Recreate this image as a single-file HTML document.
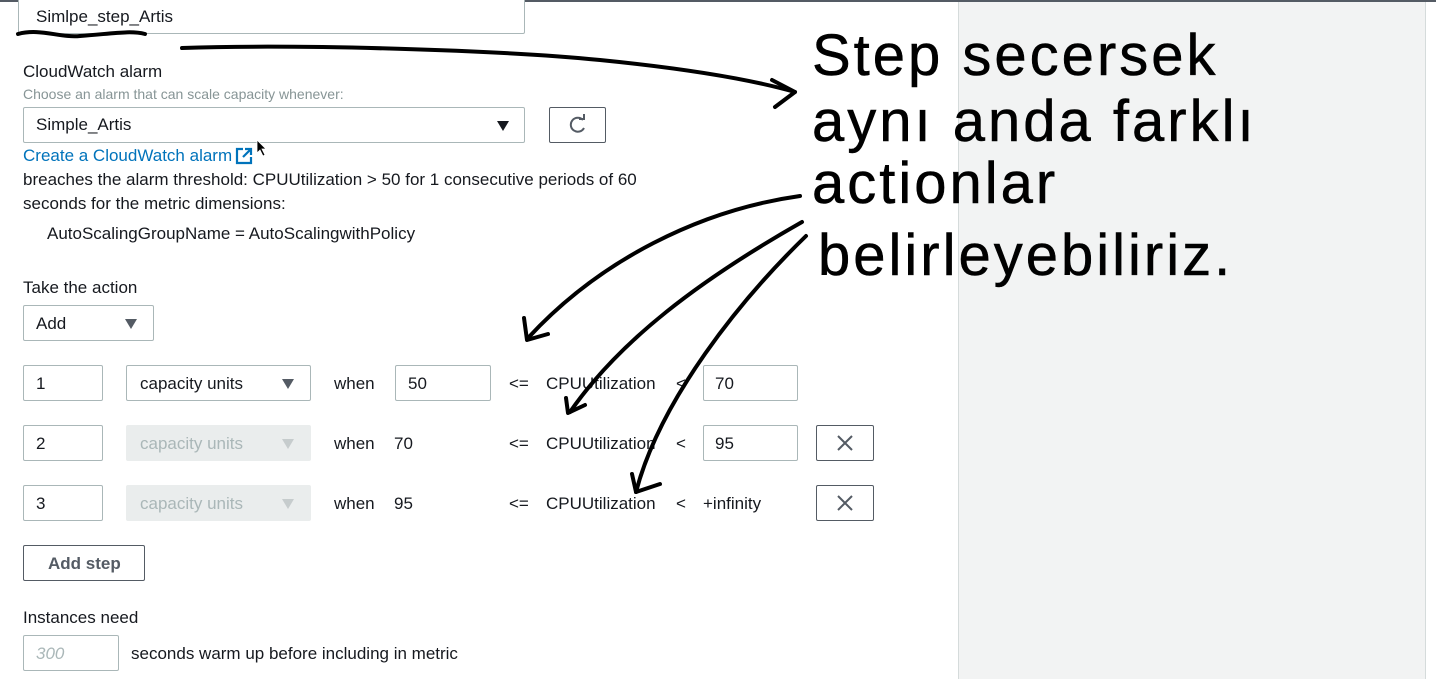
<!DOCTYPE html>
<html><head><meta charset="utf-8"><style>
body{margin:0;width:1436px;height:679px;overflow:hidden;background:#fff;font-family:"Liberation Sans",sans-serif;color:#16191f;position:relative}
.a{position:absolute;white-space:nowrap;font-size:17px;line-height:20px}
.box{position:absolute;border:1px solid #aab7b8;background:#fff;box-sizing:border-box;border-radius:2px}
.dis{background:#eaeded;border-color:#eaeded;color:#aab7b8}
.tri{position:absolute;width:0;height:0;border-left:6px solid transparent;border-right:6px solid transparent;border-top:10px solid #16191f}
.hw{position:absolute;font-size:58px;color:#000;white-space:nowrap;font-family:"Liberation Sans",sans-serif;letter-spacing:3px;-webkit-text-stroke:0.5px #000}
</style></head><body>
<div style="position:absolute;left:0;top:0;width:1436px;height:2px;background:#545b64"></div>
<div style="position:absolute;left:958px;top:2px;width:466px;height:677px;background:#f2f3f3;border-left:1px solid #d5dbdb;border-right:1px solid #d5dbdb"></div>

<div class="box" style="left:18px;top:-2px;width:507px;height:36px"></div>
<div class="a" style="left:36px;top:7px">Simlpe_step_Artis</div>

<div class="a" style="left:23px;top:62px">CloudWatch alarm</div>
<div class="a" style="left:23px;top:84px;font-size:14px;color:#879596">Choose an alarm that can scale capacity whenever:</div>
<div class="box" style="left:23px;top:107px;width:502px;height:36px"></div>
<div class="a" style="left:36px;top:115px">Simple_Artis</div>
<div class="tri" style="left:497px;top:121px"></div>
<div class="box" style="left:549px;top:107px;width:57px;height:36px;border-color:#545b64"></div>
<svg style="position:absolute;left:566px;top:114px" width="24" height="22" viewBox="0 0 24 22"><path d="M17 6 A7 7 0 1 0 18 14" fill="none" stroke="#545b64" stroke-width="2"/><path d="M13 5 L18 5 L18 0" fill="none" stroke="#545b64" stroke-width="2"/></svg>
<div class="a" style="left:23px;top:146px;color:#0073bb">Create a CloudWatch alarm</div>
<svg style="position:absolute;left:235px;top:147px" width="18" height="18" viewBox="0 0 18 18"><path d="M8 2H2v14h14v-6" fill="none" stroke="#0073bb" stroke-width="2.2"/><path d="M10 2h6v6M16 2L8 10" fill="none" stroke="#0073bb" stroke-width="2.2"/></svg>
<svg style="position:absolute;left:256px;top:139px" width="12" height="18"><path d="M1 1 L1 14 L4 11 L7 17 L9 16 L6 10 L10 10Z" fill="#000" stroke="#fff" stroke-width=".8"/></svg>
<div class="a" style="left:23px;top:170px">breaches the alarm threshold: CPUUtilization &gt; 50 for 1 consecutive periods of 60</div>
<div class="a" style="left:23px;top:194px">seconds for the metric dimensions:</div>
<div class="a" style="left:47px;top:224px">AutoScalingGroupName = AutoScalingwithPolicy</div>

<div class="a" style="left:23px;top:278px">Take the action</div>
<div class="box" style="left:23px;top:305px;width:131px;height:36px"></div>
<div class="a" style="left:36px;top:314px">Add</div>
<div class="tri" style="left:125px;top:319px;border-top-color:#545b64"></div>

<!-- row 1 -->
<div class="box" style="left:23px;top:365px;width:80px;height:36px"></div><div class="a" style="left:36px;top:374px">1</div>
<div class="box" style="left:126px;top:365px;width:185px;height:36px"></div><div class="a" style="left:140px;top:374px">capacity units</div><div class="tri" style="left:282px;top:379px;border-top-color:#545b64"></div>
<div class="a" style="left:334px;top:374px">when</div>
<div class="box" style="left:395px;top:365px;width:96px;height:36px"></div><div class="a" style="left:408px;top:374px">50</div>
<div class="a" style="left:509px;top:374px">&lt;=</div><div class="a" style="left:546px;top:374px">CPUUtilization</div><div class="a" style="left:676px;top:374px">&lt;</div>
<div class="box" style="left:703px;top:365px;width:95px;height:36px"></div><div class="a" style="left:715px;top:374px">70</div>
<!-- row 2 -->
<div class="box" style="left:23px;top:425px;width:80px;height:36px"></div><div class="a" style="left:36px;top:434px">2</div>
<div class="box dis" style="left:126px;top:425px;width:185px;height:36px"></div><div class="a" style="left:140px;top:434px;color:#aab7b8">capacity units</div><div class="tri" style="left:282px;top:439px;border-top-color:#c6cccd"></div>
<div class="a" style="left:334px;top:434px">when</div><div class="a" style="left:394px;top:434px">70</div>
<div class="a" style="left:509px;top:434px">&lt;=</div><div class="a" style="left:546px;top:434px">CPUUtilization</div><div class="a" style="left:676px;top:434px">&lt;</div>
<div class="box" style="left:703px;top:425px;width:95px;height:36px"></div><div class="a" style="left:715px;top:434px">95</div>
<div class="box" style="left:816px;top:425px;width:58px;height:36px;border-color:#545b64"></div>
<svg style="position:absolute;left:836px;top:434px" width="18" height="18"><path d="M2 2L16 16M16 2L2 16" stroke="#545b64" stroke-width="2"/></svg>
<!-- row 3 -->
<div class="box" style="left:23px;top:485px;width:80px;height:36px"></div><div class="a" style="left:36px;top:494px">3</div>
<div class="box dis" style="left:126px;top:485px;width:185px;height:36px"></div><div class="a" style="left:140px;top:494px;color:#aab7b8">capacity units</div><div class="tri" style="left:282px;top:499px;border-top-color:#c6cccd"></div>
<div class="a" style="left:334px;top:494px">when</div><div class="a" style="left:394px;top:494px">95</div>
<div class="a" style="left:509px;top:494px">&lt;=</div><div class="a" style="left:546px;top:494px">CPUUtilization</div><div class="a" style="left:676px;top:494px">&lt;</div><div class="a" style="left:703px;top:494px">+infinity</div>
<div class="box" style="left:816px;top:485px;width:58px;height:36px;border-color:#545b64"></div>
<svg style="position:absolute;left:836px;top:494px" width="18" height="18"><path d="M2 2L16 16M16 2L2 16" stroke="#545b64" stroke-width="2"/></svg>

<div class="box" style="left:23px;top:545px;width:122px;height:36px;border-color:#545b64"></div>
<div class="a" style="left:48px;top:554px;font-weight:bold;color:#545b64">Add step</div>

<div class="a" style="left:23px;top:608px">Instances need</div>
<div class="box" style="left:23px;top:635px;width:96px;height:36px"></div>
<div class="a" style="left:36px;top:644px;color:#aab7b8;font-style:italic">300</div>
<div class="a" style="left:131px;top:644px">seconds warm up before including in metric</div>

<div class="hw" style="left:812px;top:22px">Step secersek</div>
<div class="hw" style="left:812px;top:88px">aynı anda farklı</div>
<div class="hw" style="left:812px;top:150px">actionlar</div>
<div class="hw" style="left:818px;top:222px">belirleyebiliriz.</div>

<svg style="position:absolute;left:0;top:0" width="1436" height="679">
<g fill="none" stroke="#000" stroke-width="4" stroke-linecap="round" stroke-linejoin="round">
<path d="M18 34 C40 28 60 38 80 36 C110 34 130 30 145 34"/>
<path d="M182 48 C300 44 500 50 600 60 C700 70 760 82 795 92"/>
<path d="M772 80 L795 92 L775 107"/>
<path d="M800 196 C700 210 600 260 528 338"/>
<path d="M524 318 L527 340 L548 334"/>
<path d="M802 222 C700 280 620 340 570 412"/>
<path d="M566 398 L568 413 L585 405"/>
<path d="M806 236 C740 300 660 400 636 492"/>
<path d="M632 474 L636 492 L660 484"/>
</g></svg>
</body></html>
